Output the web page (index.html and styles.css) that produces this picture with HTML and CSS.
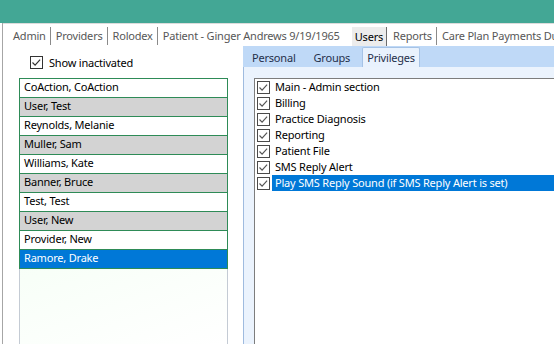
FILE: index.html
```html
<!DOCTYPE html>
<html lang="en">
<head>
    <meta charset="UTF-8">
    <title>Users - Privileges</title>
    <link rel="stylesheet" href="styles.css">
</head>
<body>
    <div class="titlebar"></div>

    <div class="app">
        <nav class="nav">
            <span class="nav-item">Admin</span>
            <span class="nav-item">Providers</span>
            <span class="nav-item">Rolodex</span>
            <span class="nav-item">Patient - Ginger Andrews 9/19/1965</span>
            <span class="nav-item active">Users</span>
            <span class="nav-item">Reports</span>
            <span class="nav-item">Care Plan Payments Due</span>
        </nav>

        <div class="workspace">
            <aside class="users-pane">
                <label class="show-inactive">
                    <svg class="cb" viewBox="0 0 13 13"><rect x="0.5" y="0.5" width="12" height="12" fill="#fff" stroke="#333"/><path d="M2.5 6.5l2.6 2.6 5-5.4" fill="none" stroke="#333" stroke-width="1.2"/></svg>
                    Show inactivated
                </label>

                <div class="user-list">
                    <div class="user-rows">
                        <div class="user-row">CoAction, CoAction</div>
                        <div class="user-row alt">User, Test</div>
                        <div class="user-row">Reynolds, Melanie</div>
                        <div class="user-row alt">Muller, Sam</div>
                        <div class="user-row">Williams, Kate</div>
                        <div class="user-row alt">Banner, Bruce</div>
                        <div class="user-row">Test, Test</div>
                        <div class="user-row alt">User, New</div>
                        <div class="user-row">Provider, New</div>
                        <div class="user-row selected">Ramore, Drake</div>
                    </div>
                </div>
            </aside>

            <section class="detail-pane">
                <div class="tabs">
                    <span class="tab">Personal</span>
                    <span class="tab">Groups</span>
                    <span class="tab active">Privileges</span>
                </div>

                <div class="tab-body">
                    <ul class="priv-list">
                        <li class="priv"><svg class="cb" viewBox="0 0 13 13"><rect x="0.5" y="0.5" width="12" height="12" fill="#fff" stroke="#4a4a4a"/><path d="M2.5 6.5l2.6 2.6 5-5.4" fill="none" stroke="#555" stroke-width="1.2"/></svg><span class="priv-label">Main - Admin section</span></li>
                        <li class="priv"><svg class="cb" viewBox="0 0 13 13"><rect x="0.5" y="0.5" width="12" height="12" fill="#fff" stroke="#4a4a4a"/><path d="M2.5 6.5l2.6 2.6 5-5.4" fill="none" stroke="#555" stroke-width="1.2"/></svg><span class="priv-label">Billing</span></li>
                        <li class="priv"><svg class="cb" viewBox="0 0 13 13"><rect x="0.5" y="0.5" width="12" height="12" fill="#fff" stroke="#4a4a4a"/><path d="M2.5 6.5l2.6 2.6 5-5.4" fill="none" stroke="#555" stroke-width="1.2"/></svg><span class="priv-label">Practice Diagnosis</span></li>
                        <li class="priv"><svg class="cb" viewBox="0 0 13 13"><rect x="0.5" y="0.5" width="12" height="12" fill="#fff" stroke="#4a4a4a"/><path d="M2.5 6.5l2.6 2.6 5-5.4" fill="none" stroke="#555" stroke-width="1.2"/></svg><span class="priv-label">Reporting</span></li>
                        <li class="priv"><svg class="cb" viewBox="0 0 13 13"><rect x="0.5" y="0.5" width="12" height="12" fill="#fff" stroke="#4a4a4a"/><path d="M2.5 6.5l2.6 2.6 5-5.4" fill="none" stroke="#555" stroke-width="1.2"/></svg><span class="priv-label">Patient File</span></li>
                        <li class="priv"><svg class="cb" viewBox="0 0 13 13"><rect x="0.5" y="0.5" width="12" height="12" fill="#fff" stroke="#4a4a4a"/><path d="M2.5 6.5l2.6 2.6 5-5.4" fill="none" stroke="#555" stroke-width="1.2"/></svg><span class="priv-label">SMS Reply Alert</span></li>
                        <li class="priv selected"><svg class="cb" viewBox="0 0 13 13"><rect x="0.5" y="0.5" width="12" height="12" fill="#fff" stroke="#4a4a4a"/><path d="M2.5 6.5l2.6 2.6 5-5.4" fill="none" stroke="#555" stroke-width="1.2"/></svg><span class="priv-label">Play SMS Reply Sound (if SMS Reply Alert is set)</span></li>
                    </ul>
                </div>
            </section>
        </div>
    </div>
</body>
</html>
```

FILE: styles.css
```css
* {
    margin: 0;
    padding: 0;
    box-sizing: border-box;
}

body {
    width: 554px;
    height: 344px;
    overflow: hidden;
    background: #fff;
    font-family: "Noto Sans", "Open Sans", sans-serif;
    font-size: 11px;
    letter-spacing: -0.2px;
    color: #000;
}

.titlebar {
    height: 23px;
    background: #43a795;
}

.app {
    margin-left: 2px;
    height: 321px;
    border-left: 1px solid #a6a6a6;
    display: flex;
    flex-direction: column;
}

/* top navigation */
.nav {
    height: 23px;
    border-top: 1px solid #dcdcdc;
    display: flex;
    align-items: center;
    padding: 2px 0 0 5px;
    white-space: nowrap;
    overflow: hidden;
}

.nav-item {
    color: #575757;
    padding: 0 4px 0 5px;
    line-height: 18px;
    border-left: 1px solid #8a8a8a;
}

.nav-item:first-child {
    border-left: none;
    padding-left: 5px;
}

.nav-item.active {
    color: #000;
    background: #ececec;
    border-right: 1px solid #6d6d6d;
    line-height: 19px;
    padding: 0 3px;
    margin-left: 8px;
    border-left: none;
}

.nav-item.active + .nav-item {
    border-left: none;
    padding-left: 6px;
}

.workspace {
    flex: 1;
    display: flex;
    min-height: 0;
}

/* users list */
.users-pane {
    width: 240px;
    flex-shrink: 0;
    display: flex;
    flex-direction: column;
}

.show-inactive {
    display: flex;
    align-items: center;
    gap: 6px;
    margin: 9px 0 0 27px;
    height: 14px;
    color: #000;
}

.cb {
    width: 13px;
    height: 13px;
    flex-shrink: 0;
    display: block;
}

.user-list {
    flex: 1;
    margin: 9px 0 0 16px;
    width: 209px;
    border-left: 1px solid #c4cbd4;
    border-right: 1px solid #c4cbd4;
    background: linear-gradient(160deg, #f2fbf2 0%, #f8fff8 60%, #fff 100%);
}

.user-rows {
    margin: 0 -1px;
    border-top: 1px solid #2e8b57;
}

.user-row {
    height: 19px;
    line-height: 16px;
    padding-left: 4px;
    background: #fff;
    border: 1px solid #2e8b57;
    border-top: none;
}

.user-row.alt {
    background: #d3d3d3;
}

.user-row.selected {
    background: #0078d7;
    color: #fff;
}

/* privileges panel */
.detail-pane {
    flex: 1;
    display: flex;
    flex-direction: column;
    min-width: 0;
}

.tabs {
    height: 21px;
    background: #bfd9f7;
    display: flex;
    align-items: flex-end;
    padding-left: 1px;
    white-space: nowrap;
}

.tab {
    height: 20px;
    line-height: 19px;
    padding: 0 7px;
    color: #1f2f4a;
    border: 1px solid transparent;
    border-bottom: none;
}

.tab + .tab {
    margin-left: 2px;
}

.tab.active {
    background: #e9f2fd;
    border-color: #a6c3e6;
    border-radius: 2px 2px 0 0;
    margin-left: 4px;
    padding: 0 4px;
}

.tab-body {
    flex: 1;
    background: #ebf3fd;
    border-left: 1px solid #9fbbdf;
    padding: 11px 0 0 10px;
    display: flex;
}

.priv-list {
    flex: 1;
    list-style: none;
    background: #fff;
    border-top: 1px solid #7d7d7d;
    border-left: 1px solid #7d7d7d;
    padding: 0 0 0 2px;
}

.priv {
    height: 16px;
    display: flex;
    align-items: center;
    white-space: nowrap;
}

.priv-label {
    margin-left: 2px;
    padding-left: 3px;
    line-height: 16px;
    flex: 1;
}

.priv.selected .priv-label {
    background: #0078d7;
    color: #fff;
}
```
